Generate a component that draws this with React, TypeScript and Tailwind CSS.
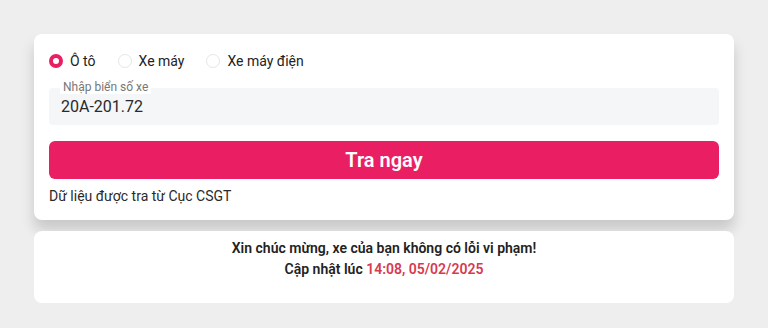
import { useState } from 'react'

const types = ['Ô tô', 'Xe máy', 'Xe máy điện']

const App = () => {
  const [selected, setSelected] = useState(0)

  return (
    <div className="min-h-[328px] bg-[#eeeeee] px-[34px] pt-[34px] font-['Roboto',sans-serif]">
      <div className="rounded-lg bg-white px-[15px] pt-[15px] pb-[14px] shadow-[0_10px_14px_rgba(0,0,0,0.16)]">
        <div className="flex h-6 items-center gap-[22px]">
          {types.map((t, i) => (
            <label
              key={t}
              onClick={() => setSelected(i)}
              className="flex cursor-pointer items-center gap-[7px] text-[14px] text-[#222]"
            >
              {selected === i ? (
                <span className="h-[14px] w-[14px] rounded-full border-[4px] border-[#e91e63] bg-white" />
              ) : (
                <span className="h-[14px] w-[14px] rounded-full border border-[#e6e6e6] bg-white" />
              )}
              {t}
            </label>
          ))}
        </div>

        <div className="relative mt-[15px] flex h-[37px] items-center rounded bg-[#f4f6f8] px-3">
          <span className="absolute -top-[8px] left-[11px] bg-white px-[3px] text-[12px] leading-[14px] text-[#777]">
            Nhập biển số xe
          </span>
          <span className="pt-[1px] text-[16px] text-[#2a2a2a]">20A-201.72</span>
        </div>

        <button className="mt-4 flex h-[38px] w-full items-center justify-center rounded-md bg-[#ea1e63] text-[20px] font-semibold text-white">
          Tra ngay
        </button>

        <p className="mt-[7px] text-[14px] leading-5 text-[#2a2a2a]">Dữ liệu được tra từ Cục CSGT</p>
      </div>

      <div className="mt-[11px] rounded-lg bg-white pt-[7px] pb-[23px] text-center text-[14px] leading-[21px] font-semibold text-[#222]">
        <p>Xin chúc mừng, xe của bạn không có lỗi vi phạm!</p>
        <p>
          Cập nhật lúc <span className="text-[#d63a50]">14:08, 05/02/2025</span>
        </p>
      </div>
    </div>
  )
}

export default App
